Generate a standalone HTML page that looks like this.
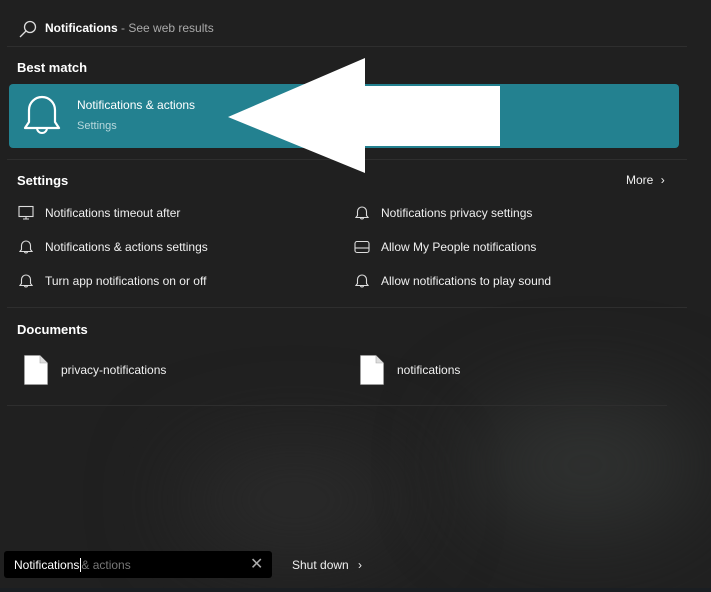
<!DOCTYPE html>
<html><head><style>
*{margin:0;padding:0;box-sizing:border-box}
body{width:711px;height:592px;overflow:hidden;background:#202020;font-family:"Segoe UI","Liberation Sans",sans-serif;color:#fff;position:relative}
.a{position:absolute;white-space:nowrap}
.t{font-size:12px;color:#f0f0f0}
.h{font-size:13px;font-weight:bold}
.ln{position:absolute;height:1px;background:#2e2e2e}
.glow{position:absolute;border-radius:50%;filter:blur(45px)}
</style></head><body>
<div class="glow" style="left:180px;top:450px;width:230px;height:100px;background:#2c2c2c"></div>
<div class="glow" style="left:470px;top:400px;width:230px;height:130px;background:#303231"></div>
<div class="a" style="left:0;top:588px;width:711px;height:4px;background:#1a1e22"></div>

<svg class="a" style="left:18px;top:19px" width="20" height="20" viewBox="0 0 20 20"><circle cx="12" cy="8" r="5.5" fill="none" stroke="#ddd" stroke-width="1.3"/><line x1="8" y1="12" x2="2" y2="18" stroke="#ddd" stroke-width="1.3"/></svg>
<div class="a" style="left:45px;top:21px;font-size:12px"><b>Notifications</b> <span style="color:#aaa">- See web results</span></div>
<div class="ln" style="left:7px;top:46px;width:680px"></div>
<div class="a h" style="left:17px;top:60px">Best match</div>

<div class="a" style="left:9px;top:84px;width:670px;height:64px;background:#238190;border-radius:4px"></div>
<svg class="a" style="left:20px;top:92px" width="44" height="48" viewBox="0 0 44 48"><path d="M5 36 L9 30 V18 A13 13 0 0 1 35 18 V30 L39 36 Z" fill="none" stroke="#fff" stroke-width="2.2" stroke-linejoin="round"/><path d="M17 36 A5 5 0 0 0 27 36" fill="none" stroke="#fff" stroke-width="2"/></svg>
<div class="a" style="left:77px;top:98px;font-size:12px">Notifications &amp; actions</div>
<div class="a" style="left:77px;top:120px;font-size:11px;color:#b8d8dd">Settings</div>

<div class="ln" style="left:7px;top:159px;width:680px"></div>
<div class="a h" style="left:17px;top:173px">Settings</div>
<div class="a t" style="left:626px;top:173px">More <span style="font-size:12px;margin-left:4px">&#x203A;</span></div>

<svg class="a" style="left:18px;top:205px" width="16" height="16" viewBox="0 0 16 16"><rect x="1" y="1.5" width="14" height="10" fill="none" stroke="#ddd" stroke-width="1.1"/><path d="M5 14h6M8 11.5v2.5" stroke="#ddd" stroke-width="1.1"/></svg>
<div class="a t" style="left:45px;top:206px">Notifications timeout after</div>
<svg class="a" style="left:18px;top:239px" width="16" height="16" viewBox="0 0 16 16"><path d="M2 12.5 L3.5 10.5 V6.5 A4.5 4.5 0 0 1 12.5 6.5 V10.5 L14 12.5 Z M6.5 12.5 A1.5 1.5 0 0 0 9.5 12.5" fill="none" stroke="#ddd" stroke-width="1.1"/></svg>
<div class="a t" style="left:45px;top:240px">Notifications &amp; actions settings</div>
<svg class="a" style="left:18px;top:273px" width="16" height="16" viewBox="0 0 16 16"><path d="M2 12.5 L3.5 10.5 V6.5 A4.5 4.5 0 0 1 12.5 6.5 V10.5 L14 12.5 Z M6.5 12.5 A1.5 1.5 0 0 0 9.5 12.5" fill="none" stroke="#ddd" stroke-width="1.1"/></svg>
<div class="a t" style="left:45px;top:274px">Turn app notifications on or off</div>

<svg class="a" style="left:354px;top:205px" width="16" height="16" viewBox="0 0 16 16"><path d="M2 12.5 L3.5 10.5 V6.5 A4.5 4.5 0 0 1 12.5 6.5 V10.5 L14 12.5 Z M6.5 12.5 A1.5 1.5 0 0 0 9.5 12.5" fill="none" stroke="#ddd" stroke-width="1.1"/></svg>
<div class="a t" style="left:381px;top:206px">Notifications privacy settings</div>
<svg class="a" style="left:354px;top:239px" width="16" height="16" viewBox="0 0 16 16"><rect x="1" y="2.5" width="14" height="11" rx="2" fill="none" stroke="#ddd" stroke-width="1.1"/><path d="M1 9h14" stroke="#ddd" stroke-width="1.1"/></svg>
<div class="a t" style="left:381px;top:240px">Allow My People notifications</div>
<svg class="a" style="left:354px;top:273px" width="16" height="16" viewBox="0 0 16 16"><path d="M2 12.5 L3.5 10.5 V6.5 A4.5 4.5 0 0 1 12.5 6.5 V10.5 L14 12.5 Z M6.5 12.5 A1.5 1.5 0 0 0 9.5 12.5" fill="none" stroke="#ddd" stroke-width="1.1"/></svg>
<div class="a t" style="left:381px;top:274px">Allow notifications to play sound</div>

<div class="ln" style="left:7px;top:307px;width:680px"></div>
<div class="a h" style="left:17px;top:322px">Documents</div>
<svg class="a" style="left:24px;top:355px" width="24" height="30" viewBox="0 0 24 30"><path d="M0.5 0.5 H16 L23.5 8 V29.5 H0.5 Z" fill="#fff" stroke="#aaa" stroke-width="0.6"/><path d="M16 0.5 V8 H23.5" fill="#ddd" stroke="#aaa" stroke-width="0.6"/></svg>
<div class="a t" style="left:61px;top:363px">privacy-notifications</div>
<svg class="a" style="left:360px;top:355px" width="24" height="30" viewBox="0 0 24 30"><path d="M0.5 0.5 H16 L23.5 8 V29.5 H0.5 Z" fill="#fff" stroke="#aaa" stroke-width="0.6"/><path d="M16 0.5 V8 H23.5" fill="#ddd" stroke="#aaa" stroke-width="0.6"/></svg>
<div class="a t" style="left:397px;top:363px">notifications</div>
<div class="ln" style="left:7px;top:405px;width:660px"></div>

<div class="a" style="left:4px;top:551px;width:268px;height:27px;background:#000;border-radius:3px"></div>
<div class="a" style="left:14px;top:558px;font-size:12px;color:#fff">Notifications<span style="border-left:1px solid #fff;margin-left:1px"></span><span style="color:#777">&amp; actions</span></div>
<div class="a" style="left:250px;top:554px;font-size:16px;color:#aaa">&#x2715;</div>
<div class="a t" style="left:292px;top:558px">Shut down <span style="margin-left:6px">&#x203A;</span></div>

<svg class="a" style="left:0;top:0" width="711" height="200"><polygon points="228,117 365,58 365,86 500,86 500,146 365,146 365,173" fill="#fff"/></svg>
</body></html>
